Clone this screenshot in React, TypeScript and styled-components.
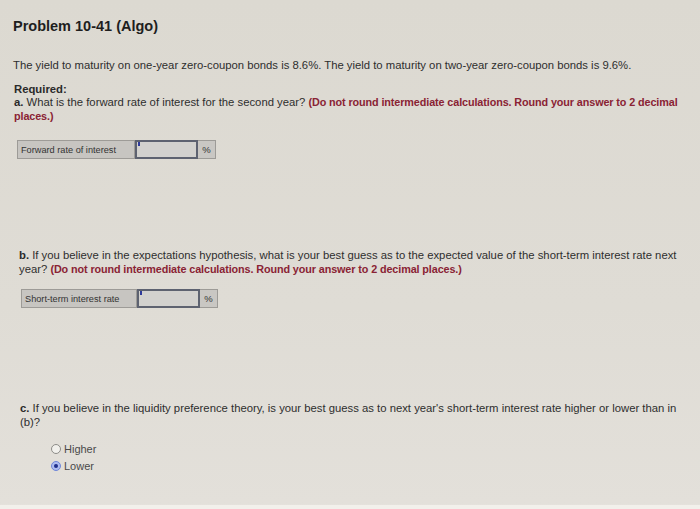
import React, { ReactElement } from 'react';
import styled, { createGlobalStyle } from 'styled-components';

const GlobalStyle = createGlobalStyle`
  html, body {
    margin: 0;
    padding: 0;
  }
  body {
    background: #dedbd3;
    font-family: 'Liberation Sans', Arial, sans-serif;
    color: #2b2b2b;
  }
`;

const Page = styled.div`
  width: 700px;
  height: 509px;
  box-sizing: border-box;
  background: linear-gradient(180deg, #dcd9d1 0%, #dfdcd5 60%, #e3e0da 99.1%, #f2f0eb 99.3%);
  overflow: hidden;
`;

const Title = styled.h1`
  margin: 0;
  padding: 18px 0 0 13px;
  font-size: 14.5px;
  font-weight: 700;
  color: #1e1e1e;
  line-height: 17px;
`;

const Section = styled.div<{ $left: number; $top: number }>`
  padding-left: ${(p) => p.$left}px;
  padding-right: 4px;
  margin-top: ${(p) => p.$top}px;
`;

const Text = styled.p`
  margin: 0;
  font-size: 11.3px;
  line-height: 13.5px;
  color: #2e2e2e;
`;

const Heading = styled.span`
  display: block;
  font-weight: 700;
  color: #2a2a2a;
`;

const Bold = styled.b`
  font-weight: 700;
  color: #2a2a2a;
`;

const Note = styled.b`
  font-weight: 700;
  font-size: 10.8px;
  letter-spacing: -0.1px;
  color: #8a2334;
`;

const AnswerRow = styled.div<{ $left: number; $top: number; $labelW: number }>`
  display: flex;
  height: 19px;
  margin-left: ${(p) => p.$left}px;
  margin-top: ${(p) => p.$top}px;
  width: fit-content;
  font-size: 9.2px;
  color: #333;

  & > :first-child {
    width: ${(p) => p.$labelW}px;
  }
`;

const Label = styled.div`
  box-sizing: border-box;
  display: flex;
  align-items: center;
  padding-left: 3px;
  background: #c7c5c1;
  border: 1px solid #9d9b97;
`;

const Input = styled.div`
  box-sizing: border-box;
  width: 63px;
  background: #d2d1ce;
  border: 2px solid #5d6270;
  position: relative;

  &::before {
    content: '';
    position: absolute;
    left: 1px;
    top: 0;
    width: 2px;
    height: 4px;
    background: #2e3a9a;
  }
`;

const Unit = styled.div`
  box-sizing: border-box;
  width: 18px;
  display: flex;
  align-items: center;
  justify-content: center;
  font-size: 9.5px;
  background: #c9c7c3;
  border: 1px solid #9d9b97;
  border-left: none;
`;

const Options = styled.div`
  margin: 13px 0 0 51px;
  display: flex;
  flex-direction: column;
  gap: 3px;
`;

const Option = styled.label`
  display: flex;
  align-items: center;
  gap: 3px;
  font-size: 11px;
  color: #4a4a4a;
  line-height: 14px;
`;

const Radio = styled.span<{ $checked?: boolean }>`
  box-sizing: border-box;
  width: 10px;
  height: 10px;
  border-radius: 50%;
  border: 1px solid ${(p) => (p.$checked ? '#6f86d8' : '#8d8c88')};
  background: ${(p) => (p.$checked ? '#aebcf0' : '#f1f0ec')};
  display: flex;
  align-items: center;
  justify-content: center;

  &::after {
    content: '';
    width: 4px;
    height: 4px;
    border-radius: 50%;
    background: ${(p) => (p.$checked ? '#1f2f8a' : 'transparent')};
  }
`;

export default function App(): ReactElement {
  return (
    <Page>
      <GlobalStyle />
      <Title>Problem 10-41 (Algo)</Title>

      <Section $left={13} $top={24}>
        <Text>
          The yield to maturity on one-year zero-coupon bonds is 8.6%. The yield to maturity on
          two-year zero-coupon bonds is 9.6%.
        </Text>
      </Section>

      <Section $left={14} $top={10}>
        <Text>
          <Heading>Required:</Heading>
          <Bold>a.</Bold> What is the forward rate of interest for the second year?{' '}
          <Note>
            (Do not round intermediate calculations. Round your answer to 2 decimal places.)
          </Note>
        </Text>
      </Section>

      <AnswerRow $left={17} $top={17} $labelW={118}>
        <Label>Forward rate of interest</Label>
        <Input />
        <Unit>%</Unit>
      </AnswerRow>

      <Section $left={19} $top={90}>
        <Text>
          <Bold>b.</Bold> If you believe in the expectations hypothesis, what is your best guess as
          to the expected value of the short-term interest rate next year?{' '}
          <Note>(Do not round intermediate calculations. Round your answer to 2 decimal places.)</Note>
        </Text>
      </Section>

      <AnswerRow $left={21} $top={13} $labelW={116}>
        <Label>Short-term interest rate</Label>
        <Input />
        <Unit>%</Unit>
      </AnswerRow>

      <Section $left={20} $top={94}>
        <Text>
          <Bold>c.</Bold> If you believe in the liquidity preference theory, is your best guess as
          to next year&apos;s short-term interest rate higher or lower than in (b)?
        </Text>
      </Section>

      <Options>
        <Option>
          <Radio />
          Higher
        </Option>
        <Option>
          <Radio $checked />
          Lower
        </Option>
      </Options>
    </Page>
  );
}
